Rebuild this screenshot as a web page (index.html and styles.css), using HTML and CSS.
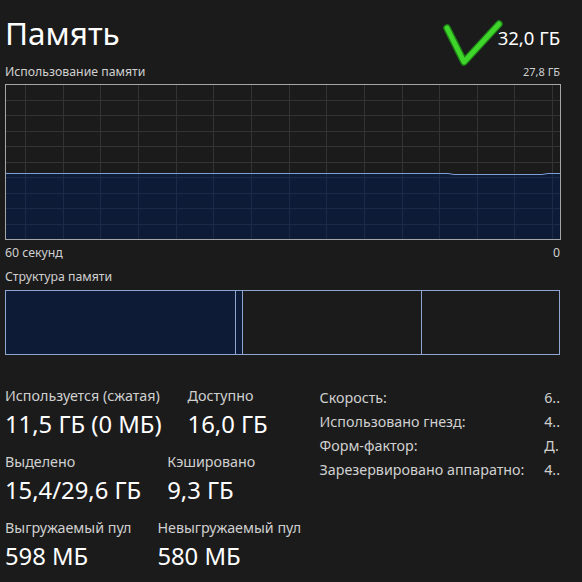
FILE: index.html
```html
<!DOCTYPE html>
<html lang="ru">
<head>
    <meta charset="UTF-8">
    <title>Память</title>
    <link rel="stylesheet" href="styles.css">
</head>
<body>
    <div class="page">
        <div class="header">
            <h1>Память</h1>
            <div class="total">32,0 ГБ</div>
            <svg class="check" width="64" height="48" viewBox="0 0 64 48">
                <polyline points="5,8 22,42 57,4" fill="none" stroke="#1d7d16" stroke-width="7.5" stroke-linecap="round" stroke-linejoin="round"/>
                <polyline points="5,8 22,42 57,4" fill="none" stroke="#3fd52b" stroke-width="5" stroke-linecap="round" stroke-linejoin="round"/>
            </svg>
        </div>

        <div class="caption">
            <span>Использование памяти</span>
            <span class="small">27,8 ГБ</span>
        </div>
        <svg class="graph" width="556" height="156" viewBox="0 0 556 156">
            <rect x="0" y="0" width="556" height="156" fill="#1b1b1b"/>
            <polygon points="0.5,89.5 443,89.5 449,90.5 537,90.5 543,89.5 555.5,89.5 555.5,155.5 0.5,155.5" fill="#0e1b37"/>
            <g id="grid" stroke-width="1"></g>
            <polyline points="0.5,89.5 443,89.5 449,90.5 537,90.5 543,89.5 555.5,89.5" fill="none" stroke="#7d9ed6" stroke-width="1"/>
            <rect x="0.5" y="0.5" width="555" height="155" fill="none" stroke="#a6a6a6" stroke-width="1"/>
        </svg>
        <div class="caption axis">
            <span>60 секунд</span>
            <span>0</span>
        </div>

        <div class="caption section">Структура памяти</div>
        <div class="structure">
            <div class="seg inuse"></div>
            <div class="seg modified"></div>
            <div class="seg standby"></div>
            <div class="seg free"></div>
        </div>

        <div class="stats">
            <div class="left">
                <div class="row">
                    <div class="stat">
                        <div class="label">Используется (сжатая)</div>
                        <div class="value">11,5 ГБ (0 МБ)</div>
                    </div>
                    <div class="stat">
                        <div class="label">Доступно</div>
                        <div class="value">16,0 ГБ</div>
                    </div>
                </div>
                <div class="row">
                    <div class="stat">
                        <div class="label">Выделено</div>
                        <div class="value">15,4/29,6 ГБ</div>
                    </div>
                    <div class="stat">
                        <div class="label">Кэшировано</div>
                        <div class="value">9,3 ГБ</div>
                    </div>
                </div>
                <div class="row">
                    <div class="stat">
                        <div class="label">Выгружаемый пул</div>
                        <div class="value">598 МБ</div>
                    </div>
                    <div class="stat">
                        <div class="label">Невыгружаемый пул</div>
                        <div class="value">580 МБ</div>
                    </div>
                </div>
            </div>
            <table class="info">
                <tr><td>Скорость:</td><td>6..</td></tr>
                <tr><td>Использовано гнезд:</td><td>4..</td></tr>
                <tr><td>Форм-фактор:</td><td>Д.</td></tr>
                <tr><td>Зарезервировано аппаратно:</td><td>4..</td></tr>
            </table>
        </div>
    </div>
    <script>
        // сетка графика
        const grid = document.getElementById('grid');
        const ns = 'http://www.w3.org/2000/svg';
        function line(x1, y1, x2, y2, color) {
            const l = document.createElementNS(ns, 'line');
            l.setAttribute('x1', x1);
            l.setAttribute('y1', y1);
            l.setAttribute('x2', x2);
            l.setAttribute('y2', y2);
            l.setAttribute('stroke', color);
            grid.appendChild(l);
        }
        for (let i = 0; i < 15; i++) {
            const x = Math.round(20 + i * 37.65) + 0.5;
            line(x, 0, x, 89, '#333333');
            line(x, 90, x, 156, '#1c2a48');
        }
        for (let j = 1; j < 10; j++) {
            const y = Math.round(j * 15.5) + 0.5;
            line(0, y, 556, y, y < 89 ? '#333333' : '#1c2a48');
        }
    </script>
</body>
</html>
```

FILE: styles.css
```css
body {
    margin: 0;
    background-color: #1b1b1b;
    color: #ffffff;
    font-family: 'Noto Sans', 'Open Sans', sans-serif;
}
.page {
    width: 555px;
    padding: 0 0 0 5px;
}
.header {
    position: relative;
    display: flex;
    justify-content: space-between;
    align-items: baseline;
    height: 62px;
}
h1 {
    margin: 0;
    padding-top: 12px;
    font-size: 31.5px;
    font-weight: 400;
    line-height: 42px;
}
.total {
    font-size: 18.5px;
    line-height: 24px;
}
.check {
    position: absolute;
    left: 437px;
    top: 20px;
}
.caption {
    display: flex;
    justify-content: space-between;
    color: #d0d0d0;
    font-size: 12.3px;
    line-height: 20px;
}
.caption .small {
    font-size: 11px;
}
.graph {
    display: block;
    margin-top: 2px;
}
.axis {
    margin-top: 3px;
}
.section {
    margin-top: 4px;
}
.structure {
    display: flex;
    height: 63px;
    margin-top: 3px;
    border: 1px solid #8fa7d0;
}
.seg {
    border-right: 1px solid #8fa7d0;
}
.inuse {
    width: 229px;
    background-color: #0e1b37;
}
.modified {
    width: 6px;
    background-color: #0e1b37;
}
.standby {
    width: 178px;
}
.free {
    flex: 1;
    border-right: none;
}
.stats {
    display: flex;
    align-items: flex-start;
    margin-top: 31px;
}
.left {
    width: 315px;
}
.row {
    display: flex;
    gap: 26px;
    margin-bottom: 10px;
}
.label {
    color: #d0d0d0;
    font-size: 14.3px;
    line-height: 20px;
}
.value {
    font-size: 23.8px;
    line-height: 36px;
}
.info {
    border-collapse: collapse;
    font-size: 14.3px;
    color: #d0d0d0;
}
.info td {
    padding: 0;
    height: 24px;
    line-height: 24px;
}
.info td:first-child {
    width: 225px;
}
```
